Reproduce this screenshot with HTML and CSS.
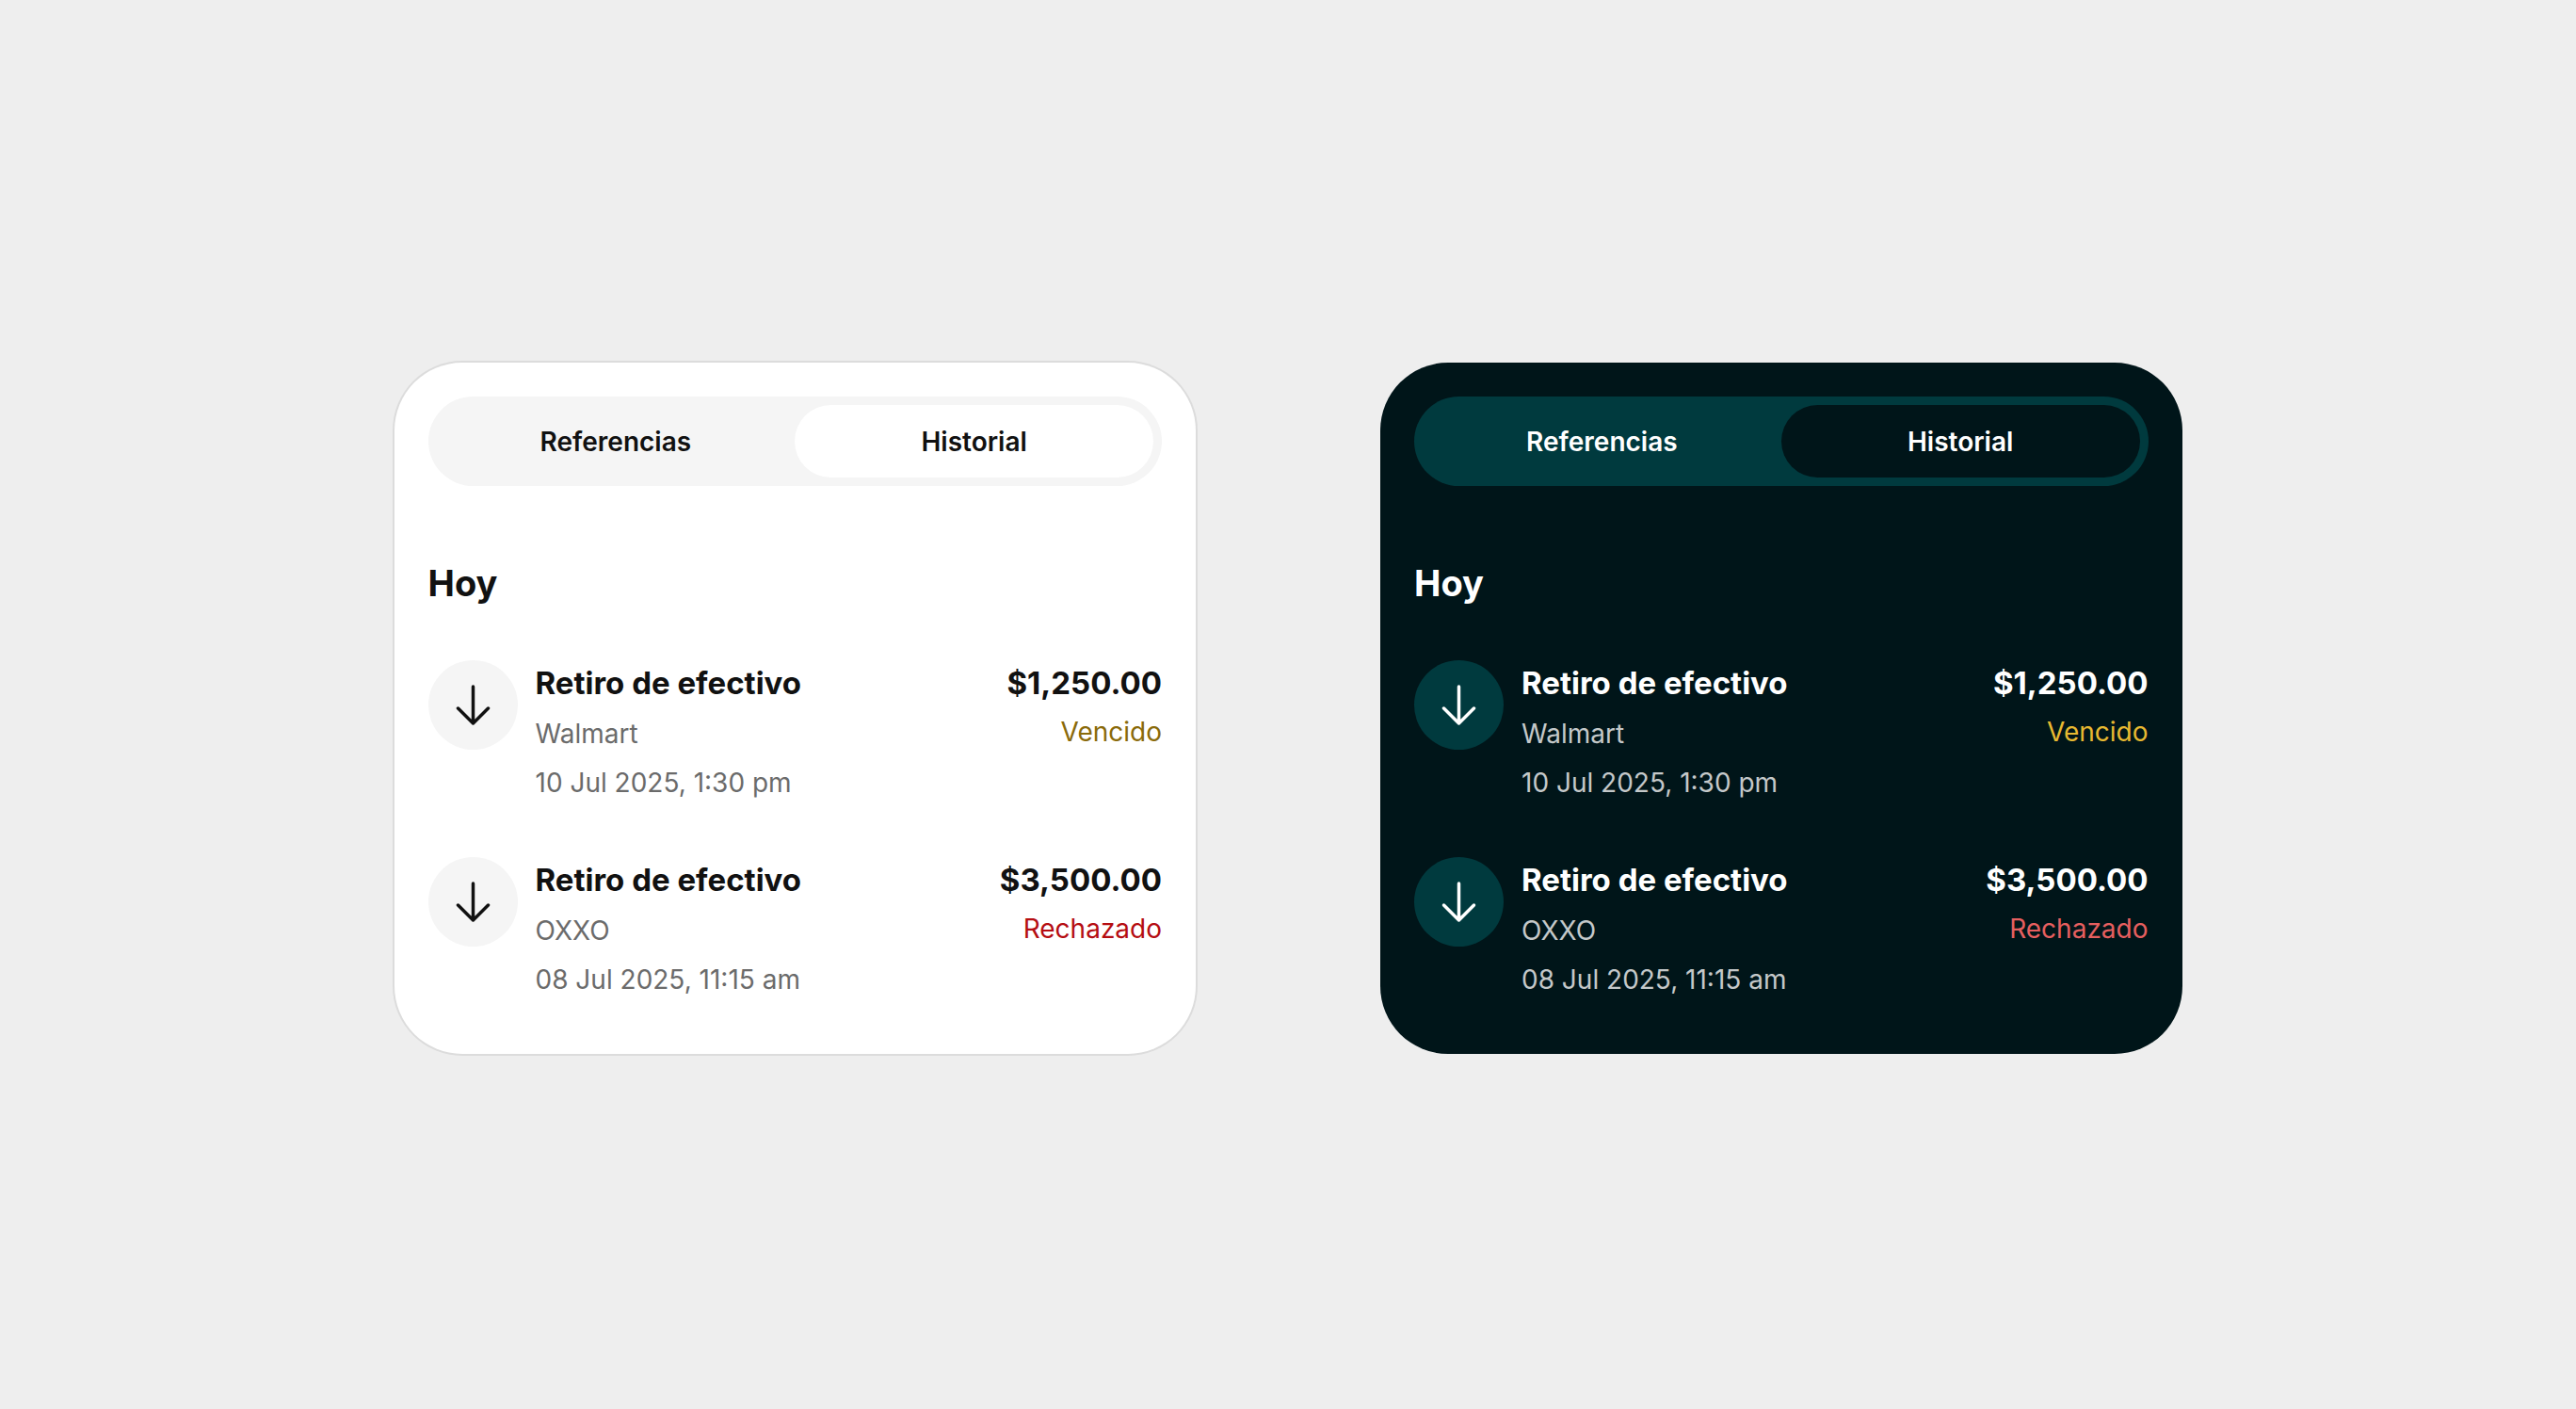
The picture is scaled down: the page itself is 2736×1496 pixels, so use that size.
FILE: index.html
```html
<!DOCTYPE html>
<html lang="es">
<head>
    <meta charset="UTF-8">
    <meta name="viewport" content="width=device-width, initial-scale=1.0">
    <title>Historial</title>
    <link rel="stylesheet" href="styles.css">
</head>
<body>
    <main class="page">
        <section class="card card-light">
            <div class="tabs">
                <button type="button" class="tab">Referencias</button>
                <button type="button" class="tab active">Historial</button>
            </div>
            <h2 class="day">Hoy</h2>
            <ul class="list">
                <li class="item">
                    <span class="icon">
                        <svg viewBox="0 0 95 95"><path d="M47.5 28V67M31.5 51L47.5 67L63.5 51"/></svg>
                    </span>
                    <div class="info">
                        <h3 class="title">Retiro de efectivo</h3>
                        <p class="meta">Walmart</p>
                        <p class="meta">10 Jul 2025, 1:30 pm</p>
                    </div>
                    <div class="amount">
                        <p class="price">$1,250.00</p>
                        <p class="status expired">Vencido</p>
                    </div>
                </li>
                <li class="item">
                    <span class="icon">
                        <svg viewBox="0 0 95 95"><path d="M47.5 28V67M31.5 51L47.5 67L63.5 51"/></svg>
                    </span>
                    <div class="info">
                        <h3 class="title">Retiro de efectivo</h3>
                        <p class="meta">OXXO</p>
                        <p class="meta">08 Jul 2025, 11:15 am</p>
                    </div>
                    <div class="amount">
                        <p class="price">$3,500.00</p>
                        <p class="status rejected">Rechazado</p>
                    </div>
                </li>
            </ul>
        </section>

        <section class="card card-dark">
            <div class="tabs">
                <button type="button" class="tab">Referencias</button>
                <button type="button" class="tab active">Historial</button>
            </div>
            <h2 class="day">Hoy</h2>
            <ul class="list">
                <li class="item">
                    <span class="icon">
                        <svg viewBox="0 0 95 95"><path d="M47.5 28V67M31.5 51L47.5 67L63.5 51"/></svg>
                    </span>
                    <div class="info">
                        <h3 class="title">Retiro de efectivo</h3>
                        <p class="meta">Walmart</p>
                        <p class="meta">10 Jul 2025, 1:30 pm</p>
                    </div>
                    <div class="amount">
                        <p class="price">$1,250.00</p>
                        <p class="status expired">Vencido</p>
                    </div>
                </li>
                <li class="item">
                    <span class="icon">
                        <svg viewBox="0 0 95 95"><path d="M47.5 28V67M31.5 51L47.5 67L63.5 51"/></svg>
                    </span>
                    <div class="info">
                        <h3 class="title">Retiro de efectivo</h3>
                        <p class="meta">OXXO</p>
                        <p class="meta">08 Jul 2025, 11:15 am</p>
                    </div>
                    <div class="amount">
                        <p class="price">$3,500.00</p>
                        <p class="status rejected">Rechazado</p>
                    </div>
                </li>
            </ul>
        </section>
    </main>
</body>
</html>
```

FILE: styles.css
```css
* {
    box-sizing: border-box;
    margin: 0;
    padding: 0;
}
body {
    font-family: Inter, sans-serif;
    background-color: #eeeeee;
}
.page {
    display: grid;
    grid-template-columns: 1fr 1fr;
    gap: 196px;
    align-content: center;
    max-width: 1899px;
    min-height: 100vh;
    margin: 0 auto;
    padding-top: 8px;
}

/* Themes */
.card-light {
    --bg: #ffffff;
    --surface: #f5f5f5;
    --text: #111111;
    --muted: #6b6b6b;
    --warning: #8a6a0a;
    --danger: #b50d12;
    box-shadow: 0 0 0 2px #dcdcdc;
}
.card-dark {
    --bg: #001519;
    --surface: #003a3e;
    --text: #ffffff;
    --muted: #c4c8c9;
    --warning: #e8b931;
    --danger: #e65f5f;
}

.card {
    background-color: var(--bg);
    color: var(--text);
    border-radius: 72px;
    padding: 36px 36px 53px;
}

/* Tabs */
.tabs {
    display: flex;
    padding: 9px;
    border-radius: 48px;
    background-color: var(--surface);
}
.tab {
    flex: 1;
    height: 77px;
    border: none;
    border-radius: 39px;
    background: none;
    color: var(--text);
    font-family: inherit;
    font-size: 28px;
    font-weight: 600;
    cursor: pointer;
}
.tab.active {
    background-color: var(--bg);
}

.day {
    margin: 77px 0 56px;
    font-size: 38px;
    line-height: 52px;
    font-weight: 700;
}

/* Movements */
.list {
    display: flex;
    flex-direction: column;
    gap: 53px;
    list-style: none;
}
.item {
    display: flex;
    align-items: flex-start;
    gap: 19px;
}
.icon {
    flex: none;
    width: 95px;
    height: 95px;
    border-radius: 50%;
    background-color: var(--surface);
}
.icon svg {
    display: block;
    fill: none;
    stroke: var(--text);
    stroke-width: 3.5;
    stroke-linecap: round;
    stroke-linejoin: round;
}
.info {
    flex: 1;
}
.title,
.price {
    font-size: 33px;
    line-height: 48px;
    font-weight: 700;
}
.title {
    margin-bottom: 4px;
}
.price {
    margin-bottom: 2px;
}
.meta,
.status {
    font-size: 28px;
    line-height: 52px;
}
.meta {
    color: var(--muted);
}
.amount {
    text-align: right;
}
.expired {
    color: var(--warning);
}
.rejected {
    color: var(--danger);
}
```
